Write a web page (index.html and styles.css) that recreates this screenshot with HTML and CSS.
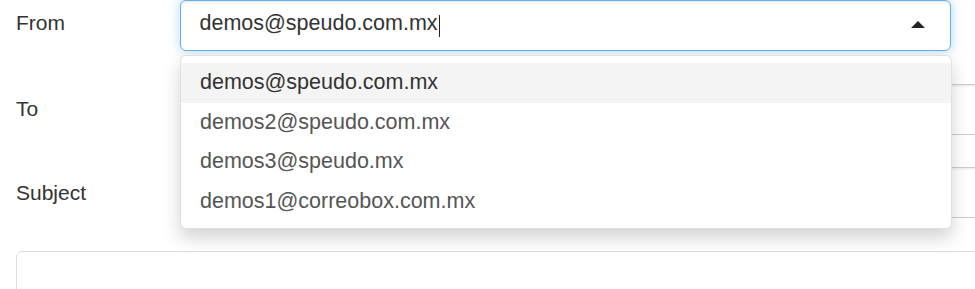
FILE: index.html
```html
<!DOCTYPE html>
<html lang="en">
<head>
    <meta charset="UTF-8">
    <meta name="viewport" content="width=device-width, initial-scale=1.0">
    <title>Compose</title>
    <link rel="stylesheet" href="styles.css">
</head>
<body>

    <form class="compose">
        <!-- From: open combo box -->
        <div class="form-row">
            <label class="label-from">From</label>
            <div class="combo">
                <div class="combo-box">
                    <span class="combo-text">demos@speudo.com.mx</span>
                    <span class="text-cursor"></span>
                    <span class="combo-arrow"></span>
                </div>
                <ul class="combo-list">
                    <li class="active">demos@speudo.com.mx</li>
                    <li>demos2@speudo.com.mx</li>
                    <li>demos3@speudo.mx</li>
                    <li>demos1@correobox.com.mx</li>
                </ul>
            </div>
        </div>

        <div class="form-row">
            <label>To</label>
            <input type="text" class="field">
        </div>

        <div class="form-row">
            <label>Subject</label>
            <input type="text" class="field">
        </div>

        <textarea class="message"></textarea>
    </form>

</body>
</html>
```

FILE: styles.css
```css
/* Reset default styles */
* {
    box-sizing: border-box;
    margin: 0;
    padding: 0;
}

html, body {
    background: #fff;
    overflow: hidden;
}

body {
    font-family: 'Liberation Sans', Arial, sans-serif;
    font-size: 21.5px;
    color: #333;
    width: 975px;
    height: 289px;
}

/* Form layout */
.compose {
    width: 1300px;
    padding-left: 16px;
    display: flex;
    flex-direction: column;
    gap: 32.5px;
}

.form-row {
    display: grid;
    grid-template-columns: 164px 1fr;
    align-items: center;
}

.form-row label {
    color: #333;
    font-size: 21px;
    line-height: 30px;
}

.form-row .label-from {
    margin-bottom: 5px;
}

.field {
    height: 51px;
    border: 1.5px solid #ccc;
    border-radius: 6px;
    background: #fff;
    font: inherit;
    box-shadow: inset 0 1.5px 1.5px rgba(0, 0, 0, 0.075);
}

/* Combo box (select) */
.combo {
    position: relative;
    width: 771px;
}

.combo-box {
    height: 51px;
    border: 1.5px solid #66afe9;
    border-radius: 6px;
    background: #fff;
    box-shadow: inset 0 1.5px 1.5px rgba(0, 0, 0, 0.075), 0 0 12px rgba(102, 175, 233, 0.5);
    display: flex;
    align-items: center;
    padding: 0 25px 5px 18.5px;
}

.combo-text {
    color: #333;
    line-height: 24px;
}

.text-cursor {
    width: 1px;
    height: 22px;
    background: #222;
    margin-left: 1px;
    margin-top: 5px;
}

.combo-arrow {
    margin-left: auto;
    width: 0;
    height: 0;
    border-style: solid;
    border-width: 0 7.5px 7px;
    border-color: transparent transparent #222;
    margin-top: 3px;
}

.combo-list {
    position: absolute;
    top: 55px;
    left: 0;
    width: 772px;
    list-style: none;
    background: #fff;
    border: 1px solid rgba(0, 0, 0, 0.12);
    border-radius: 6px;
    box-shadow: 0 9px 18px rgba(0, 0, 0, 0.175);
    padding: 7px 0;
    z-index: 10;
}

.combo-list li {
    padding: 9px 19px;
    line-height: 21.5px;
    color: #555;
}

.combo-list li.active {
    background: #f4f4f4;
    color: #333;
}

/* Message body */
.message {
    width: 1200px;
    height: 120px;
    border: 1.5px solid #ddd;
    border-radius: 6px;
    background: #fff;
    resize: none;
}
```
